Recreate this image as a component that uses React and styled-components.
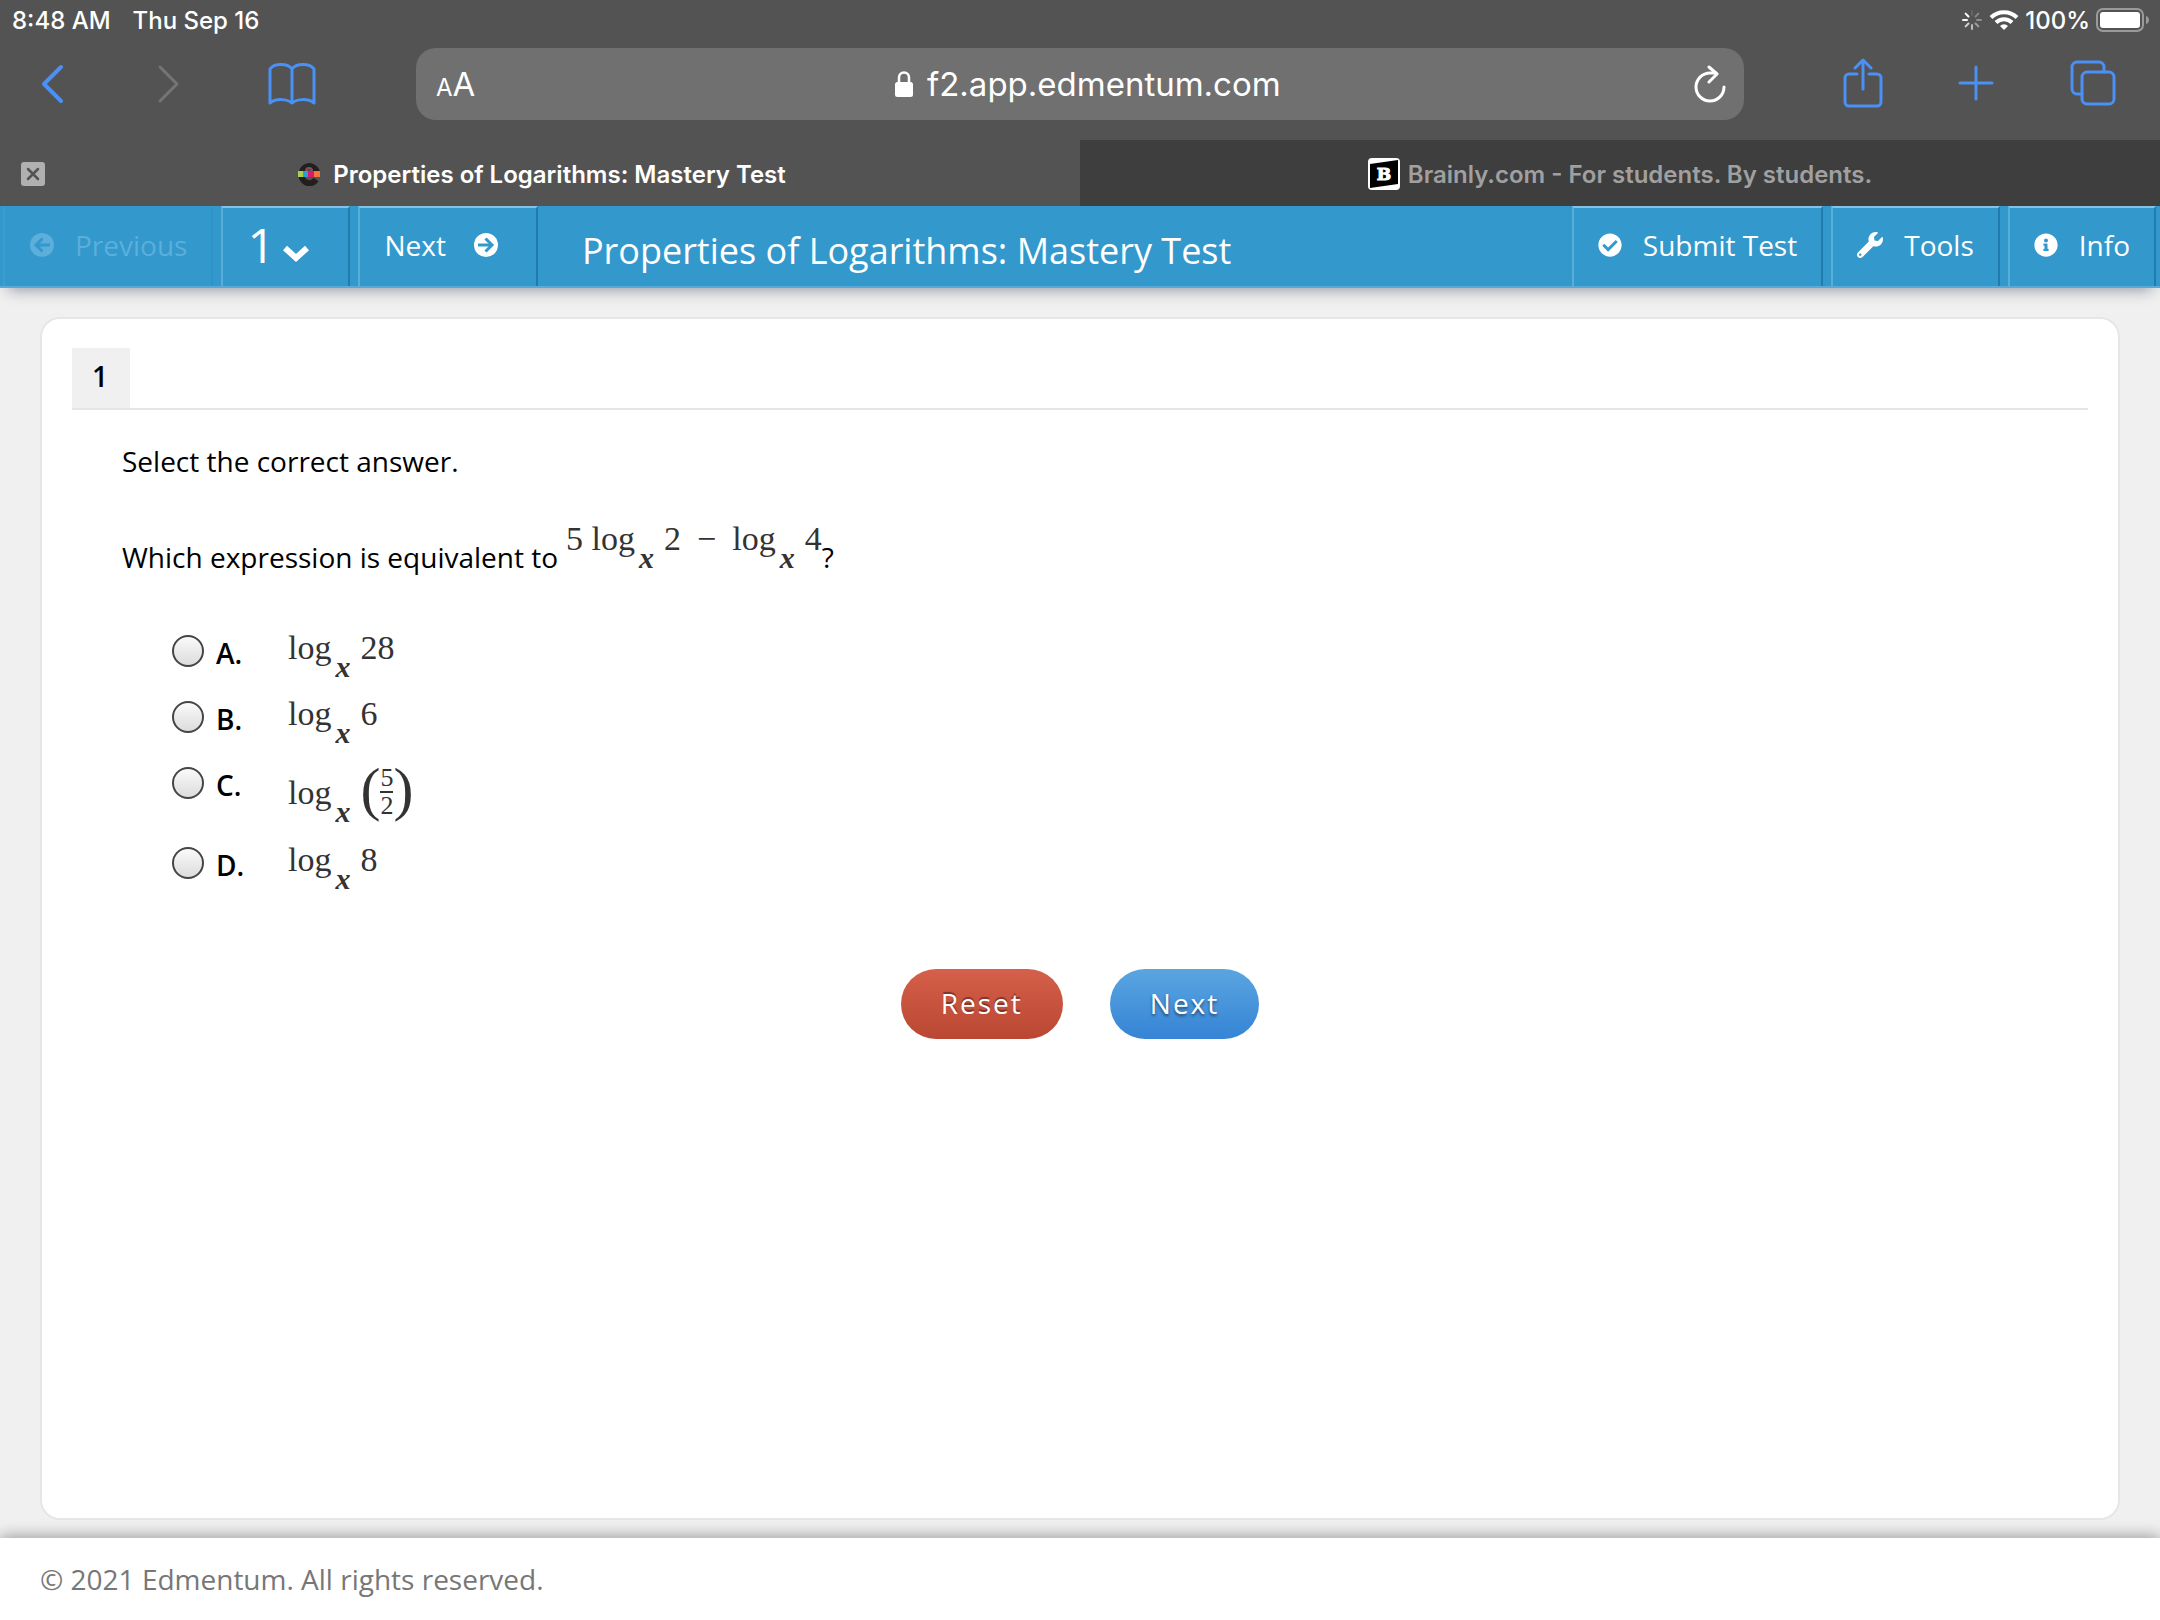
import { FaCheckCircle, FaInfoCircle, FaWrench } from "react-icons/fa";
import styled, { createGlobalStyle } from "styled-components";

const GlobalStyle = createGlobalStyle`
*{
  box-sizing: border-box;
}
body{
  margin: 0;
  background-color: #f0f0f0;
  font-family: "Open Sans", "Noto Sans", sans-serif;
  font-size: 28px;
  color: #000;
}
button, input, select{
  margin: 0;
  padding: 0;
  border: 0;
  background: none;
  color: inherit;
  font: inherit;
}
svg{
  display: block;
}
`;

const Page = styled.div`
display: flex;
flex-direction: column;
min-height: 100vh;
`;

/* ---------- browser ---------- */

const Browser = styled.div`
background-color: #535353;
color: white;
font-family: Inter, "Liberation Sans", sans-serif;
`;

const StatusBar = styled.div`
display: flex;
justify-content: space-between;
align-items: center;
height: 40px;
padding: 0 10px 0 12px;
font-size: 24px;
font-weight: 500;
`;

const StatusGroup = styled.div`
display: flex;
align-items: center;
gap: ${(props) => props.$gap}px;
`;

const Toolbar = styled.div`
display: flex;
align-items: center;
height: 100px;
padding-bottom: 12px;
`;

const ToolbarSide = styled.div`
flex: 0 0 416px;
display: flex;
align-items: center;
justify-content: ${(props) => (props.$right ? "flex-end" : "flex-start")};
gap: ${(props) => (props.$right ? 73 : 78)}px;
padding: ${(props) => (props.$right ? "0 43px 2px 0" : "0 0 0 32px")};
color: #4a90f5;
`;

const IconButton = styled.button`
color: ${(props) => (props.disabled ? "#757575" : "inherit")};
`;

const AddressBar = styled.div`
flex: 1;
display: flex;
align-items: center;
justify-content: space-between;
height: 72px;
padding: 0 18px 0 20px;
border-radius: 20px;
background-color: #707070;
`;

const TextSize = styled.button`
width: 44px;
text-align: left;
font-size: 33px;
small{
  font-size: 24px;
}
`;

const Location = styled.label`
display: flex;
align-items: center;
gap: 14px;
`;

const Url = styled.input`
width: 352px;
font-size: 33px;
outline: none;
`;

const Tabs = styled.div`
display: flex;
height: 66px;
`;

const Tab = styled.div`
flex: 1;
display: flex;
align-items: center;
padding: 2px 21px 0;
background-color: ${(props) => (props.$active ? "transparent" : "#3e3e3e")};
color: ${(props) => (props.$active ? "white" : "#a0a0a0")};
font-size: 24px;
font-weight: 600;
`;

const TabTitle = styled.button`
flex: 1;
display: flex;
align-items: center;
justify-content: center;
gap: ${(props) => props.$gap}px;
padding-right: ${(props) => (props.$closable ? 20 : 0)}px;
white-space: nowrap;
`;

/* ---------- test ---------- */

const Header = styled.header`
position: relative;
display: flex;
height: 82px;
padding: 0 4px 0 3px;
border-bottom: 2px solid #58a9d8;
background-color: #3398cc;
color: white;
box-shadow: 0 10px 14px -8px rgba(0, 20, 50, 0.4);
`;

const HeaderGroup = styled.div`
display: flex;
gap: 8px;
`;

const headerItem = `
display: flex;
align-items: center;
padding-bottom: 4px;
border: 2px solid;
border-color: #85c1e2 #227bad transparent #58add9;
border-bottom: 0;
`;

const HeaderButton = styled.button`
${headerItem}
gap: ${(props) => props.$gap}px;
padding-left: 24px;
padding-right: 24px;
&:disabled{
  padding-left: 25px;
  border-color: #3398cc #2e93c8 transparent #3b9dd0;
  color: #5caedb;
}
`;

const HeaderNext = styled(HeaderButton)`
padding-right: 38px;
`;

const PageSelect = styled.label`
${headerItem}
width: 129px;
padding-left: 24px;
gap: 8px;
svg{
  margin-top: 18px;
}
`;

const Select = styled.select`
appearance: none;
width: 28px;
font-size: 48px;
line-height: 64px;
outline: none;
`;

const Title = styled.h1`
flex: 1;
margin: 0;
padding: 9px 0 0 44px;
font-size: 36px;
font-weight: 400;
line-height: 72px;
`;

const Card = styled.main`
flex: 1;
margin: 29px 40px 18px;
padding: 29px 30px;
border: 2px solid #e6e6e6;
border-radius: 20px;
background-color: white;
`;

const QuestionBar = styled.div`
display: flex;
border-bottom: 2px solid #e6e6e6;
`;

const QuestionNumber = styled.div`
width: 58px;
height: 60px;
padding-right: 2px;
background-color: #f0f0f0;
font-weight: 600;
line-height: 56px;
text-align: center;
`;

const Question = styled.div`
padding: 31px 50px 0;
`;

const Text = styled.p`
margin: 0 0 56px;
line-height: 40px;
`;

const Prompt = styled(Text)`
margin-bottom: 46px;
`;

const Choices = styled.fieldset`
margin: 0;
padding: 0 0 0 50px;
border: 0;
`;

const Choice = styled.label`
display: flex;
align-items: flex-start;
width: 300px;
height: ${(props) => (props.$tall ? 80 : 66)}px;
`;

const Radio = styled.input`
appearance: none;
width: 32px;
height: 32px;
margin: 12px 12px 0 0;
border: 2px solid #454545;
border-radius: 50%;
background-image: linear-gradient(#fafafa, #dcdcdc);
&:checked{
  border-width: 10px;
}
`;

const Letter = styled.span`
width: 72px;
padding-top: 10px;
font-weight: 600;
line-height: 40px;
`;

const Answer = styled.span`
display: flex;
align-items: center;
height: ${(props) => (props.$tall ? 76 : 50)}px;
`;

const Expression = styled.span`
color: #333;
font-family: "Liberation Serif", serif;
font-size: 34px;
line-height: 40px;
white-space: nowrap;
`;

const InlineExpression = styled(Expression)`
margin-left: 8px;
line-height: 0;
vertical-align: 18px;
`;

const Base = styled.sub`
margin: 0 10px 0 4px;
font-size: 30px;
font-style: italic;
font-weight: 700;
line-height: 0;
vertical-align: -18px;
`;

const Minus = styled.span`
margin: 0 16px;
`;

const Paren = styled.span`
padding-bottom: 8px;
color: #333;
font-family: "Liberation Serif", serif;
font-size: 60px;
line-height: 60px;
`;

const Fraction = styled.span`
display: flex;
flex-direction: column;
padding-bottom: 2px;
color: #333;
font-family: "Liberation Serif", serif;
font-size: 26px;
line-height: 26px;
span + span{
  border-top: 2px solid #333;
}
`;

const Actions = styled.div`
display: flex;
justify-content: center;
gap: 47px;
padding-top: 68px;
`;

const Action = styled.button`
height: 70px;
padding: 0 40px 2px;
border-radius: 35px;
background-image: ${(props) =>
    props.$primary
        ? "linear-gradient(#5aa5e0, #3584d6)"
        : "linear-gradient(#d5604b, #b94731)"};
color: white;
letter-spacing: 2px;
text-shadow: ${(props) =>
    props.$primary
        ? "0 2px 3px rgba(0, 0, 0, 0.5)"
        : "0 -2px 1px rgba(0, 0, 0, 0.4)"};
`;

const Footer = styled.footer`
height: 82px;
padding: 21px 40px 0;
background-color: white;
box-shadow: 0 -2px 14px rgba(0, 0, 0, 0.35);
color: #777;
line-height: 40px;
`;

function Icon({ width, height, stroke = 3, children }) {
    return (
        <svg
            width={width}
            height={height}
            viewBox={`0 0 ${width} ${height}`}
            fill="none"
            stroke="currentColor"
            strokeWidth={stroke}
            strokeLinecap="round"
            strokeLinejoin="round"
            aria-hidden="true"
        >
            {children}
        </svg>
    );
}

const spokes = [0.1, 0.3, 0.35, 0.45, 0.6, 0.75, 0.95, 1];

function Spinner() {
    return (
        <Icon width={22} height={22} stroke={2}>
            {spokes.map((opacity, i) => (
                <path key={i} d="M11 2V6" opacity={opacity} transform={`rotate(${i * 45} 11 11)`} />
            ))}
        </Icon>
    );
}

function Wifi() {
    return (
        <svg width="30" height="22" viewBox="0 0 30 22" fill="none" stroke="white" strokeWidth="4" aria-hidden="true">
            <path d="M2 8.5a18.500 18.500 0 0 1 26 0" />
            <path d="M7 13.500a11.500 11.500 0 0 1 16 0" />
            <path d="M15 21l-4-4a5.600 5.600 0 0 1 8 0z" fill="white" stroke="none" />
        </svg>
    );
}

function Battery() {
    return (
        <svg width="54" height="24" viewBox="0 0 54 24" aria-hidden="true">
            <rect x="1" y="1" width="46" height="22" rx="6" fill="none" stroke="#9a9a9a" strokeWidth="2" />
            <rect x="4" y="4" width="40" height="16" rx="3" fill="white" />
            <path d="M50 8c4 1 4 7 0 8z" fill="#9a9a9a" />
        </svg>
    );
}

function Lock() {
    return (
        <svg width="18" height="28" viewBox="0 0 18 28" aria-hidden="true">
            <path d="M4 13V7.500a5 5 0 0 1 10 0V13" fill="none" stroke="white" strokeWidth="2.500" />
            <rect x="0" y="12" width="18" height="15" rx="2.500" fill="white" />
        </svg>
    );
}

function EdmentumLogo() {
    return (
        <svg width="22" height="24" viewBox="0 0 22 24" aria-hidden="true">
            <path d="M18 17.500A8 8.500 0 1 1 19 10" fill="none" stroke="#231f20" strokeWidth="6" />
            <path d="M8 12V9a3 3 0 0 1 6 0v3" fill="none" stroke="#83505a" strokeWidth="2" />
            <rect x="0" y="9" width="5" height="6" fill="#a8d04d" />
            <rect x="5" y="9" width="5" height="6" fill="#2a9fd0" />
            <rect x="10" y="9" width="6" height="6" fill="#d81b72" />
            <rect x="16" y="9" width="6" height="6" fill="#f4753a" />
        </svg>
    );
}

function BrainlyLogo() {
    return (
        <svg width="32" height="32" viewBox="0 0 32 32" aria-hidden="true">
            <rect width="32" height="32" rx="4" fill="white" />
            <path d="M2 6L30 2V26L2 30z" fill="black" />
            <text x="16" y="22" textAnchor="middle" fill="white" stroke="white" strokeWidth="1" fontFamily="DejaVu Serif" fontWeight="700" fontSize="17">B</text>
        </svg>
    );
}

function ArrowCircle({ left }) {
    return (
        <svg width="24" height="24" viewBox="0 0 24 24" fill="none" aria-hidden="true">
            <circle cx="12" cy="12" r="12" fill="currentColor" />
            <g stroke="#3398cc" strokeWidth="3" transform={left ? "rotate(180 12 12)" : undefined}>
                <path d="M4 12H18" />
                <path d="M11.500 5.500L18 12l-6.500 6.500" />
            </g>
        </svg>
    );
}

function Log() {
    return <>log<Base>x</Base></>;
}

function BrowserChrome() {
    return (
        <Browser>
            <StatusBar>
                <StatusGroup $gap={22}>
                    <span>8:48 AM</span>
                    <span>Thu Sep 16</span>
                </StatusGroup>
                <StatusGroup $gap={6}>
                    <Spinner />
                    <Wifi />
                    <span>100%</span>
                    <Battery />
                </StatusGroup>
            </StatusBar>
            <Toolbar>
                <ToolbarSide>
                    <IconButton aria-label="Back">
                        <Icon width={40} height={40} stroke={4}><path d="M29 3L12 20l17 17" /></Icon>
                    </IconButton>
                    <IconButton aria-label="Forward" disabled>
                        <Icon width={40} height={40}><path d="M10 3l17 17-17 17" /></Icon>
                    </IconButton>
                    <IconButton aria-label="Bookmarks">
                        <Icon width={48} height={44}>
                            <path d="M24 7C20 1 6 1 2 7V41C8 36 19 37 24 41C29 37 40 36 46 41V7C42 1 28 1 24 7V41" />
                        </Icon>
                    </IconButton>
                </ToolbarSide>
                <AddressBar>
                    <TextSize aria-label="Text size"><small>A</small>A</TextSize>
                    <Location>
                        <Lock />
                        <Url type="text" aria-label="Address" defaultValue="f2.app.edmentum.com" />
                    </Location>
                    <IconButton aria-label="Reload">
                        <Icon width={32} height={38}>
                            <path d="M30 22A14 14 0 1 1 16 8H22" />
                            <path d="M15 2l8 7-8 8" />
                        </Icon>
                    </IconButton>
                </AddressBar>
                <ToolbarSide $right>
                    <IconButton aria-label="Share">
                        <Icon width={40} height={50}>
                            <path d="M14 16H6a4 4 0 0 0-4 4V44a4 4 0 0 0 4 4H34a4 4 0 0 0 4-4V20a4 4 0 0 0-4-4H26" />
                            <path d="M20 31V3M12 10l8-8 8 8" />
                        </Icon>
                    </IconButton>
                    <IconButton aria-label="New tab">
                        <Icon width={40} height={40}><path d="M20 4V36M4 20H36" /></Icon>
                    </IconButton>
                    <IconButton aria-label="Show tabs">
                        <Icon width={48} height={46}>
                            <rect x="13" y="12" width="32" height="32" rx="5" />
                            <path d="M13 34H8a5 5 0 0 1-5-5V7a5 5 0 0 1 5-5H30a5 5 0 0 1 5 5V12" />
                        </Icon>
                    </IconButton>
                </ToolbarSide>
            </Toolbar>
            <Tabs>
                <Tab $active>
                    <IconButton aria-label="Close tab">
                        <svg width="24" height="24" viewBox="0 0 24 24" aria-hidden="true">
                            <rect width="24" height="24" rx="3" fill="#b0b0b0" />
                            <path d="M7 7L17 17M17 7L7 17" stroke="#535353" strokeWidth="2.500" strokeLinecap="round" />
                        </svg>
                    </IconButton>
                    <TabTitle $gap={13} $closable>
                        <EdmentumLogo />
                        Properties of Logarithms: Mastery Test
                    </TabTitle>
                </Tab>
                <Tab>
                    <TabTitle $gap={8}>
                        <BrainlyLogo />
                        Brainly.com - For students. By students.
                    </TabTitle>
                </Tab>
            </Tabs>
        </Browser>
    );
}

function TestHeader() {
    return (
        <Header>
            <HeaderGroup>
                <HeaderButton $gap={21} disabled><ArrowCircle left />Previous</HeaderButton>
                <PageSelect>
                    <Select aria-label="Question">
                        <option>1</option>
                    </Select>
                    <svg width="26" height="18" viewBox="0 0 26 18" fill="none" stroke="white" strokeWidth="6" aria-hidden="true">
                        <path d="M2 3l11 10 11-10" />
                    </svg>
                </PageSelect>
                <HeaderNext $gap={28}>Next<ArrowCircle /></HeaderNext>
            </HeaderGroup>
            <Title>Properties of Logarithms: Mastery Test</Title>
            <HeaderGroup>
                <HeaderButton $gap={21}><FaCheckCircle size={24} />Submit Test</HeaderButton>
                <HeaderButton $gap={21}><FaWrench size={26} />Tools</HeaderButton>
                <HeaderButton $gap={21}><FaInfoCircle size={24} />Info</HeaderButton>
            </HeaderGroup>
        </Header>
    );
}

const choices = [
    { letter: "A", value: "28" },
    { letter: "B", value: "6" },
    { letter: "C", fraction: ["5", "2"] },
    { letter: "D", value: "8" },
];

function App() {
    return (
        <Page>
            <GlobalStyle />
            <BrowserChrome />
            <TestHeader />
            <Card>
                <QuestionBar>
                    <QuestionNumber>1</QuestionNumber>
                </QuestionBar>
                <Question>
                    <Text>Select the correct answer.</Text>
                    <Prompt>
                        Which expression is equivalent to
                        <InlineExpression>
                            5 <Log />2<Minus>−</Minus><Log />4
                        </InlineExpression>
                        ?
                    </Prompt>
                    <Choices aria-label="Answers">
                        {choices.map(({ letter, value, fraction }) => (
                            <Choice key={letter} $tall={!!fraction}>
                                <Radio type="radio" name="answer" value={letter} />
                                <Letter>{letter}.</Letter>
                                <Answer $tall={!!fraction}>
                                    <Expression><Log />{value}</Expression>
                                    {fraction && (
                                        <>
                                            <Paren>(</Paren>
                                            <Fraction>
                                                <span>{fraction[0]}</span>
                                                <span>{fraction[1]}</span>
                                            </Fraction>
                                            <Paren>)</Paren>
                                        </>
                                    )}
                                </Answer>
                            </Choice>
                        ))}
                    </Choices>
                </Question>
                <Actions>
                    <Action>Reset</Action>
                    <Action $primary>Next</Action>
                </Actions>
            </Card>
            <Footer>© 2021 Edmentum. All rights reserved.</Footer>
        </Page>
    );
}

export default App;
